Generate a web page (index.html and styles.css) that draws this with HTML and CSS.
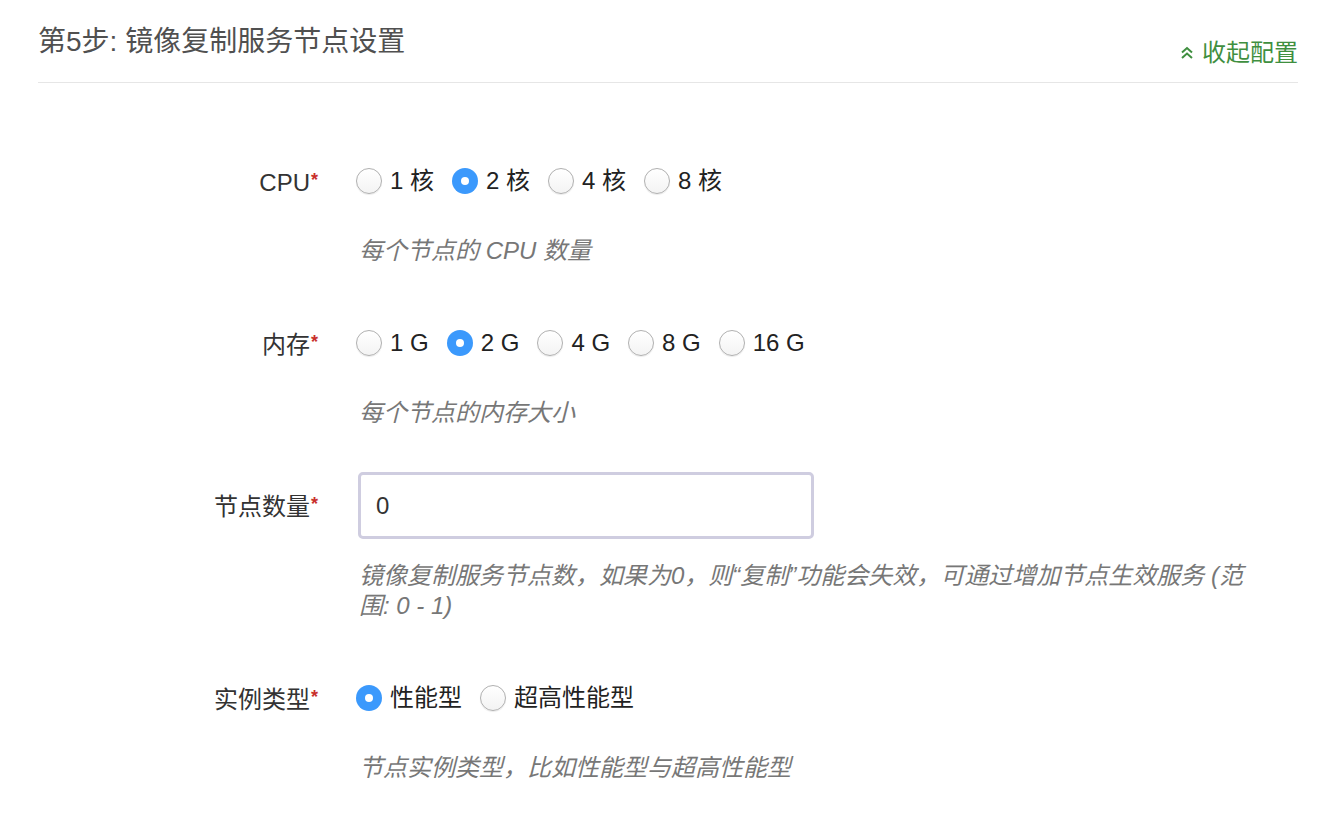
FILE: index.html
```html
<!DOCTYPE html>
<html lang="zh-CN">
<head>
<meta charset="utf-8">
<title>镜像复制服务节点设置</title>
<link rel="stylesheet" href="styles.css">
</head>
<body>
<div class="panel">
  <div class="panel-header">
    <h2 class="panel-title">第5步: 镜像复制服务节点设置</h2>
    <a class="collapse-link" href="#">
      <svg class="chev" width="14" height="14" viewBox="0 0 14 14"><path d="M2 6.5 L7 2 L12 6.5 M2 12 L7 7.5 L12 12" fill="none" stroke="currentColor" stroke-width="2"/></svg>
      收起配置
    </a>
  </div>

  <div class="form">
    <div class="group">
      <div class="row">
        <label class="label">CPU<span class="req">*</span></label>
        <div class="control radios">
          <label class="opt"><input type="radio" name="cpu" class="radio"><span>1 核</span></label>
          <label class="opt"><input type="radio" name="cpu" class="radio" checked><span>2 核</span></label>
          <label class="opt"><input type="radio" name="cpu" class="radio"><span>4 核</span></label>
          <label class="opt"><input type="radio" name="cpu" class="radio"><span>8 核</span></label>
        </div>
      </div>
      <p class="help">每个节点的 CPU 数量</p>
    </div>

    <div class="group">
      <div class="row">
        <label class="label">内存<span class="req">*</span></label>
        <div class="control radios">
          <label class="opt"><input type="radio" name="mem" class="radio"><span>1 G</span></label>
          <label class="opt"><input type="radio" name="mem" class="radio" checked><span>2 G</span></label>
          <label class="opt"><input type="radio" name="mem" class="radio"><span>4 G</span></label>
          <label class="opt"><input type="radio" name="mem" class="radio"><span>8 G</span></label>
          <label class="opt"><input type="radio" name="mem" class="radio"><span>16 G</span></label>
        </div>
      </div>
      <p class="help">每个节点的内存大小</p>
    </div>

    <div class="group">
      <div class="row">
        <label class="label">节点数量<span class="req">*</span></label>
        <div class="control">
          <input class="text-input" type="text" value="0">
        </div>
      </div>
      <p class="help">镜像复制服务节点数，如果为0，则“复制”功能会失效，可通过增加节点生效服务 (范围: 0 - 1)</p>
    </div>

    <div class="group">
      <div class="row">
        <label class="label">实例类型<span class="req">*</span></label>
        <div class="control radios">
          <label class="opt"><input type="radio" name="type" class="radio" checked><span>性能型</span></label>
          <label class="opt"><input type="radio" name="type" class="radio"><span>超高性能型</span></label>
        </div>
      </div>
      <p class="help">节点实例类型，比如性能型与超高性能型</p>
    </div>
  </div>
</div>
</body>
</html>
```

FILE: styles.css
```css
html, body {
  margin: 0;
  padding: 0;
  background: #fff;
}

body {
  font-family: "Liberation Sans", "Noto Sans CJK SC", sans-serif;
  color: #333;
}

.panel {
  width: 1260px;
  margin-left: 38px;
}

.panel-header {
  display: flex;
  justify-content: space-between;
  align-items: flex-start;
  height: 60px;
  padding-top: 22px;
  box-sizing: content-box;
  border-bottom: 1px solid #e6e6e6;
}

.panel-title {
  margin: 0;
  font-size: 28px;
  line-height: 40px;
  font-weight: normal;
  color: #505050;
}

.collapse-link {
  margin-top: 16px;
  display: flex;
  align-items: center;
  gap: 8px;
  font-size: 24px;
  line-height: 30px;
  color: #3f8f3f;
  text-decoration: none;
}

.chev {
  display: block;
}

.form {
  padding-top: 65px;
}

.group {
  margin-bottom: 44px;
}

.row {
  display: flex;
  align-items: center;
  min-height: 66px;
}

.label {
  width: 280px;
  flex: none;
  text-align: right;
  font-size: 24px;
  line-height: 30px;
  color: #333;
}

.req {
  color: #c9302c;
  font-size: 18px;
  font-weight: bold;
  vertical-align: 5px;
  margin-left: 1px;
}

.control {
  margin-left: 38px;
}

.radios {
  display: flex;
  align-items: center;
  gap: 18px;
}

.opt {
  display: flex;
  align-items: center;
  gap: 8px;
  font-size: 24px;
  line-height: 30px;
  color: #222;
  cursor: pointer;
}

.radio {
  -webkit-appearance: none;
  appearance: none;
  margin: 0;
  width: 26px;
  height: 26px;
  border-radius: 50%;
  border: 1px solid #b0b0b0;
  background: linear-gradient(#ffffff, #f3f3f3);
  box-shadow: 0 1px 1px rgba(0, 0, 0, 0.08);
  box-sizing: border-box;
  position: relative;
  flex: none;
}

.radio:checked {
  border: none;
  background: #3b99fc;
  box-shadow: none;
}

.radio:checked::after {
  content: "";
  position: absolute;
  left: 9px;
  top: 9px;
  width: 8px;
  height: 8px;
  border-radius: 50%;
  background: #fff;
}

.text-input {
  display: block;
  box-sizing: border-box;
  width: 456px;
  height: 67px;
  margin-left: 2px;
  border: 3px solid #cfcde0;
  border-radius: 5px;
  padding: 0 15px;
  font-family: "Liberation Sans", "Noto Sans CJK SC", sans-serif;
  font-size: 24px;
  color: #333;
  outline: none;
}

.help {
  margin: 22px 0 0 318px;
  width: 900px;
  padding-left: 3px;
  font-size: 24px;
  line-height: 30px;
  font-style: italic;
  color: #777;
}
```
